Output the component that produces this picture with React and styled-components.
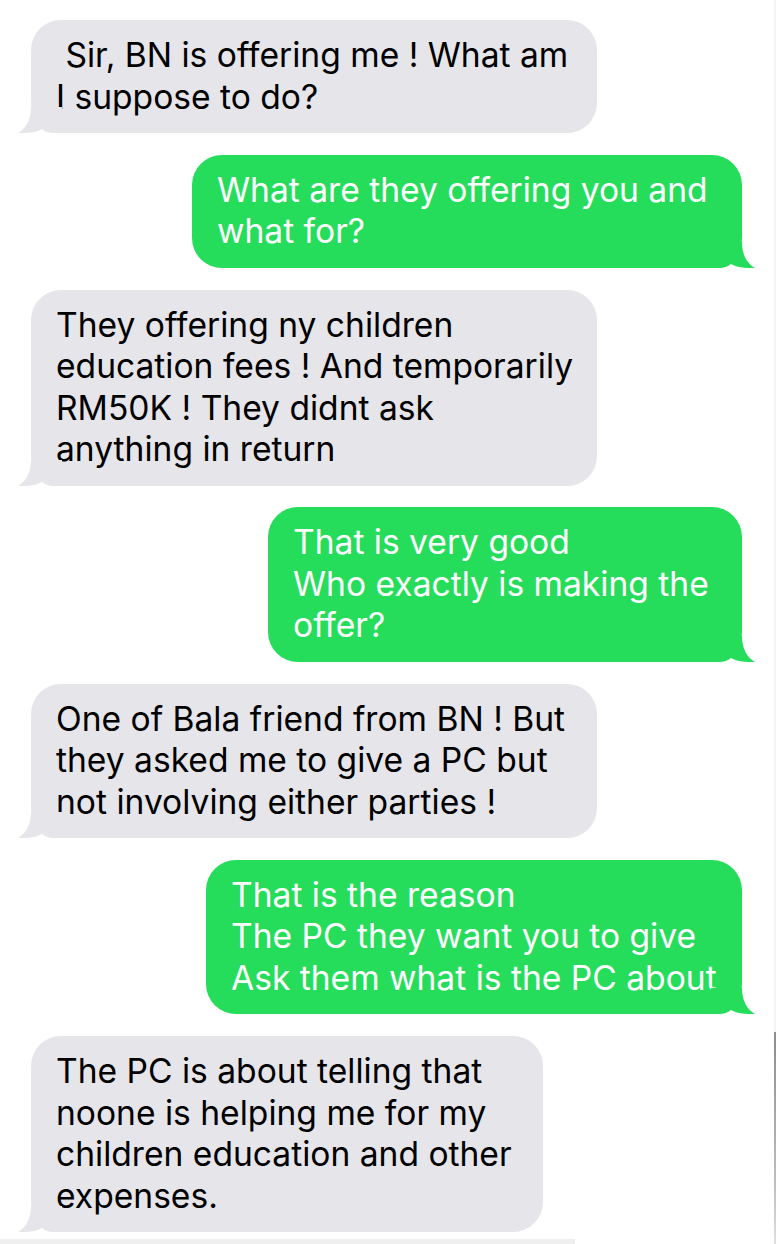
import React from "react";
import styled, { createGlobalStyle } from "styled-components";

const GlobalStyle = createGlobalStyle`
  html, body {
    margin: 0;
    padding: 0;
    background: #ffffff;
  }
  body {
    font-family: "Inter", "Liberation Sans", Arial, sans-serif;
  }
`;

const GRAY = "#e5e5ea";
const GREEN = "#26dd5b";

const Page = styled.div`
  width: 778px;
  height: 1244px;
  display: flex;
  overflow: hidden;
  background: #ffffff;
`;

const Main = styled.div`
  flex: 1;
  display: flex;
  flex-direction: column;
`;

const Thread = styled.div`
  display: flex;
  flex-direction: column;
  gap: 21.8px;
  padding-top: 20px;
`;

const EdgeLine = styled.div`
  width: 2px;
  margin-right: 2px;
  background: linear-gradient(
    to bottom,
    #f4f4f4 0,
    #f4f4f4 1032px,
    #8c8c8c 1032px,
    #bdbdbd 1180px,
    #dedede 1244px
  );
`;

const BottomStrip = styled.div`
  margin-top: auto;
  width: 575px;
  height: 5px;
  background: #efefef;
`;

const Bubble = styled.div`
  position: relative;
  box-sizing: border-box;
  width: ${(p) => p.$width}px;
  align-self: ${(p) => (p.$me ? "flex-end" : "flex-start")};
  margin: ${(p) => (p.$me ? "0 32px 0 0" : "0 0 0 31px")};
  padding: 14px 24px 16px 25px;
  border-radius: 30px;
  background: ${(p) => (p.$me ? GREEN : GRAY)};
  color: ${(p) => (p.$me ? "#ffffff" : "#000000")};
  font-size: 33.6px;
  line-height: 41.5px;
`;

const Line = styled.div`
  white-space: pre;
`;

const TailSvg = styled.svg`
  position: absolute;
  bottom: 0;
  ${(p) => (p.$me ? "right: -15px;" : "left: -15px;")}
  transform: ${(p) => (p.$me ? "scaleX(-1)" : "none")};
  display: block;
`;

const Tail = ({ me }) => (
  <TailSvg $me={me} width="46" height="26" viewBox="0 0 46 26">
    <path
      d="M15,0 H46 V26 H38 C33,26 29,24.5 26,22 C21,25 13,26.5 2,26 C9,22 15,14 15,0 Z"
      fill={me ? GREEN : GRAY}
    />
  </TailSvg>
);

const messages = [
  { me: false, width: 566, lines: [" Sir, BN is offering me ! What am", "I suppose to do?"] },
  { me: true, width: 550, lines: ["What are they offering you and", "what for?"] },
  {
    me: false,
    width: 566,
    lines: [
      "They offering ny children",
      "education fees ! And temporarily",
      "RM50K ! They didnt ask",
      "anything in return",
    ],
  },
  {
    me: true,
    width: 474,
    lines: ["That is very good", "Who exactly is making the", "offer?"],
  },
  {
    me: false,
    width: 566,
    lines: [
      "One of Bala friend from BN ! But",
      "they asked me to give a PC but",
      "not involving either parties !",
    ],
  },
  {
    me: true,
    width: 536,
    lines: [
      "That is the reason",
      "The PC they want you to give",
      "Ask them what is the PC about",
    ],
  },
  {
    me: false,
    width: 512,
    lines: [
      "The PC is about telling that",
      "noone is helping me for my",
      "children education and other",
      "expenses.",
    ],
  },
];

const App = () => {
  return (
    <>
      <GlobalStyle />
      <Page>
        <Main>
          <Thread>
            {messages.map((m, i) => (
              <Bubble key={i} $me={m.me} $width={m.width}>
                {m.lines.map((l, j) => (
                  <Line key={j}>{l}</Line>
                ))}
                <Tail me={m.me} />
              </Bubble>
            ))}
          </Thread>
          <BottomStrip />
        </Main>
        <EdgeLine />
      </Page>
    </>
  );
};

export default App;
